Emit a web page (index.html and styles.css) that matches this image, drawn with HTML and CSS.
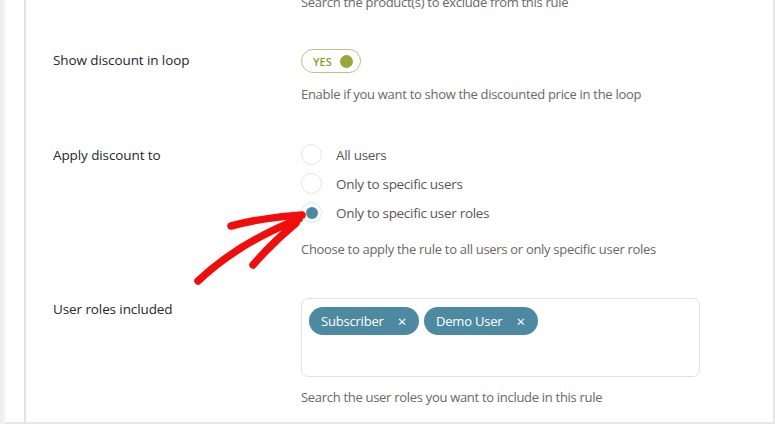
FILE: index.html
```html
<!DOCTYPE html>
<html>
<head>
<meta charset="utf-8">
<link rel="stylesheet" href="styles.css">
</head>
<body>
<div class="page">
  <div class="strip"></div>
  <div class="frame">
    <div class="gutter"></div>
    <main class="panel">
      <div class="row row-cut">
        <div class="label"></div>
        <div class="field"><p class="desc">Search the product(s) to exclude from this rule</p></div>
      </div>

      <div class="row">
        <div class="label">Show discount in loop</div>
        <div class="field">
          <div class="toggle"><span class="toggle-text">YES</span><span class="toggle-dot"></span></div>
          <p class="desc desc-toggle">Enable if you want to show the discounted price in the loop</p>
        </div>
      </div>

      <div class="row row-radios">
        <div class="label">Apply discount to</div>
        <div class="field">
          <ul class="radios">
            <li class="radio"><span class="circle"></span><span>All users</span></li>
            <li class="radio"><span class="circle"></span><span>Only to specific users</span></li>
            <li class="radio"><span class="circle checked"></span><span>Only to specific user roles</span></li>
          </ul>
          <p class="desc desc-radios">Choose to apply the rule to all users or only specific user roles</p>
        </div>
      </div>

      <div class="row">
        <div class="label">User roles included</div>
        <div class="field">
          <div class="select">
            <span class="chip">Subscriber<span class="x">×</span></span>
            <span class="chip">Demo User<span class="x">×</span></span>
          </div>
          <p class="desc desc-select">Search the user roles you want to include in this rule</p>
        </div>
      </div>
    </main>
  </div>
  <svg class="arrow" width="775" height="424" viewBox="0 0 775 424">
    <g fill="none" stroke="#f20d0d" stroke-width="7.5" stroke-linecap="round" stroke-linejoin="round">
      <path d="M198 281 Q 238 243 299 219"/>
      <path d="M231 226 Q 265 217 302 215"/>
      <path d="M253 265 Q 272 243 296 223"/>
    </g>
  </svg>
</div>
</body>
</html>
```
FILE: styles.css
```css
* { box-sizing: border-box; }
html, body { margin: 0; padding: 0; background: #fff; }
body {
  font-family: "Open Sans", "Noto Sans", sans-serif;
  font-size: 13px;
  letter-spacing: -0.3px;
  color: #1d2327;
  width: 775px;
  height: 424px;
  overflow: hidden;
}
.page {
  position: relative;
  display: flex;
  height: 424px;
}
.strip {
  width: 5px;
  background: linear-gradient(to right, #ececec, #f4f4f4);
  flex: none;
}
.frame {
  flex: 1;
  display: flex;
  border-bottom: 2px solid #e6e6e6;
  height: 424px;
}
.gutter { width: 19px; flex: none; }
.panel {
  flex: 1;
  border-left: 2px solid #e3e3e3;
  border-right: 2px solid #e6e6e6;
  padding: 0 0 0 27px;
  overflow: hidden;
}
.row {
  display: grid;
  grid-template-columns: 248px 1fr;
  padding-bottom: 40px;
}
.row-cut { margin-top: -8px; padding-bottom: 37px; }
.row-radios { padding-bottom: 39px; }
.label {
  font-size: 13.5px;
  font-weight: 500;
  line-height: 20px;
  padding-top: 1px;
  letter-spacing: -0.1px;
  color: #23282d;
}
.desc {
  margin: 0;
  line-height: 20px;
  color: #6b6767;
}
.toggle {
  width: 60px;
  height: 24px;
  border: 1.5px solid #b8c47f;
  border-radius: 12px;
  display: flex;
  align-items: center;
  padding: 0 7px 0 11px;
  justify-content: space-between;
}
.toggle-text {
  font-size: 11px;
  font-weight: 600;
  letter-spacing: 0;
  color: #8d9a34;
}
.toggle-dot {
  width: 13px;
  height: 13px;
  border-radius: 50%;
  background: #97a73a;
}
.desc-toggle { margin-top: 11px; }
.radios {
  list-style: none;
  margin: 0;
  padding: 0;
  display: flex;
  flex-direction: column;
  gap: 8px;
}
.radio {
  display: flex;
  align-items: center;
  height: 21px;
  gap: 14px;
  color: #5b5656;
  font-size: 13.5px;
}
.circle {
  width: 21px;
  height: 21px;
  border-radius: 50%;
  border: 1.5px solid #e4e4e4;
  display: flex;
  align-items: center;
  justify-content: center;
  flex: none;
}
.circle.checked::after {
  content: "";
  width: 12px;
  height: 12px;
  border-radius: 50%;
  background: #4c89a1;
}
.desc-radios { margin-top: 16px; }
.select {
  width: 399px;
  height: 79px;
  border: 1px solid #e2e2e2;
  border-radius: 7px;
  padding: 8px 7px;
  display: flex;
  align-items: flex-start;
  gap: 5px;
}
.chip {
  display: inline-flex;
  align-items: center;
  height: 28px;
  padding: 0 13px 0 12px;
  border-radius: 14px;
  background: #4d8aa1;
  color: #fff;
  font-size: 13px;
  letter-spacing: -0.2px;
}
.chip .x {
  margin-left: 14px;
  font-size: 15px;
}
.desc-select { margin-top: 10px; }
.arrow {
  position: absolute;
  left: 0;
  top: 0;
  pointer-events: none;
}
```
